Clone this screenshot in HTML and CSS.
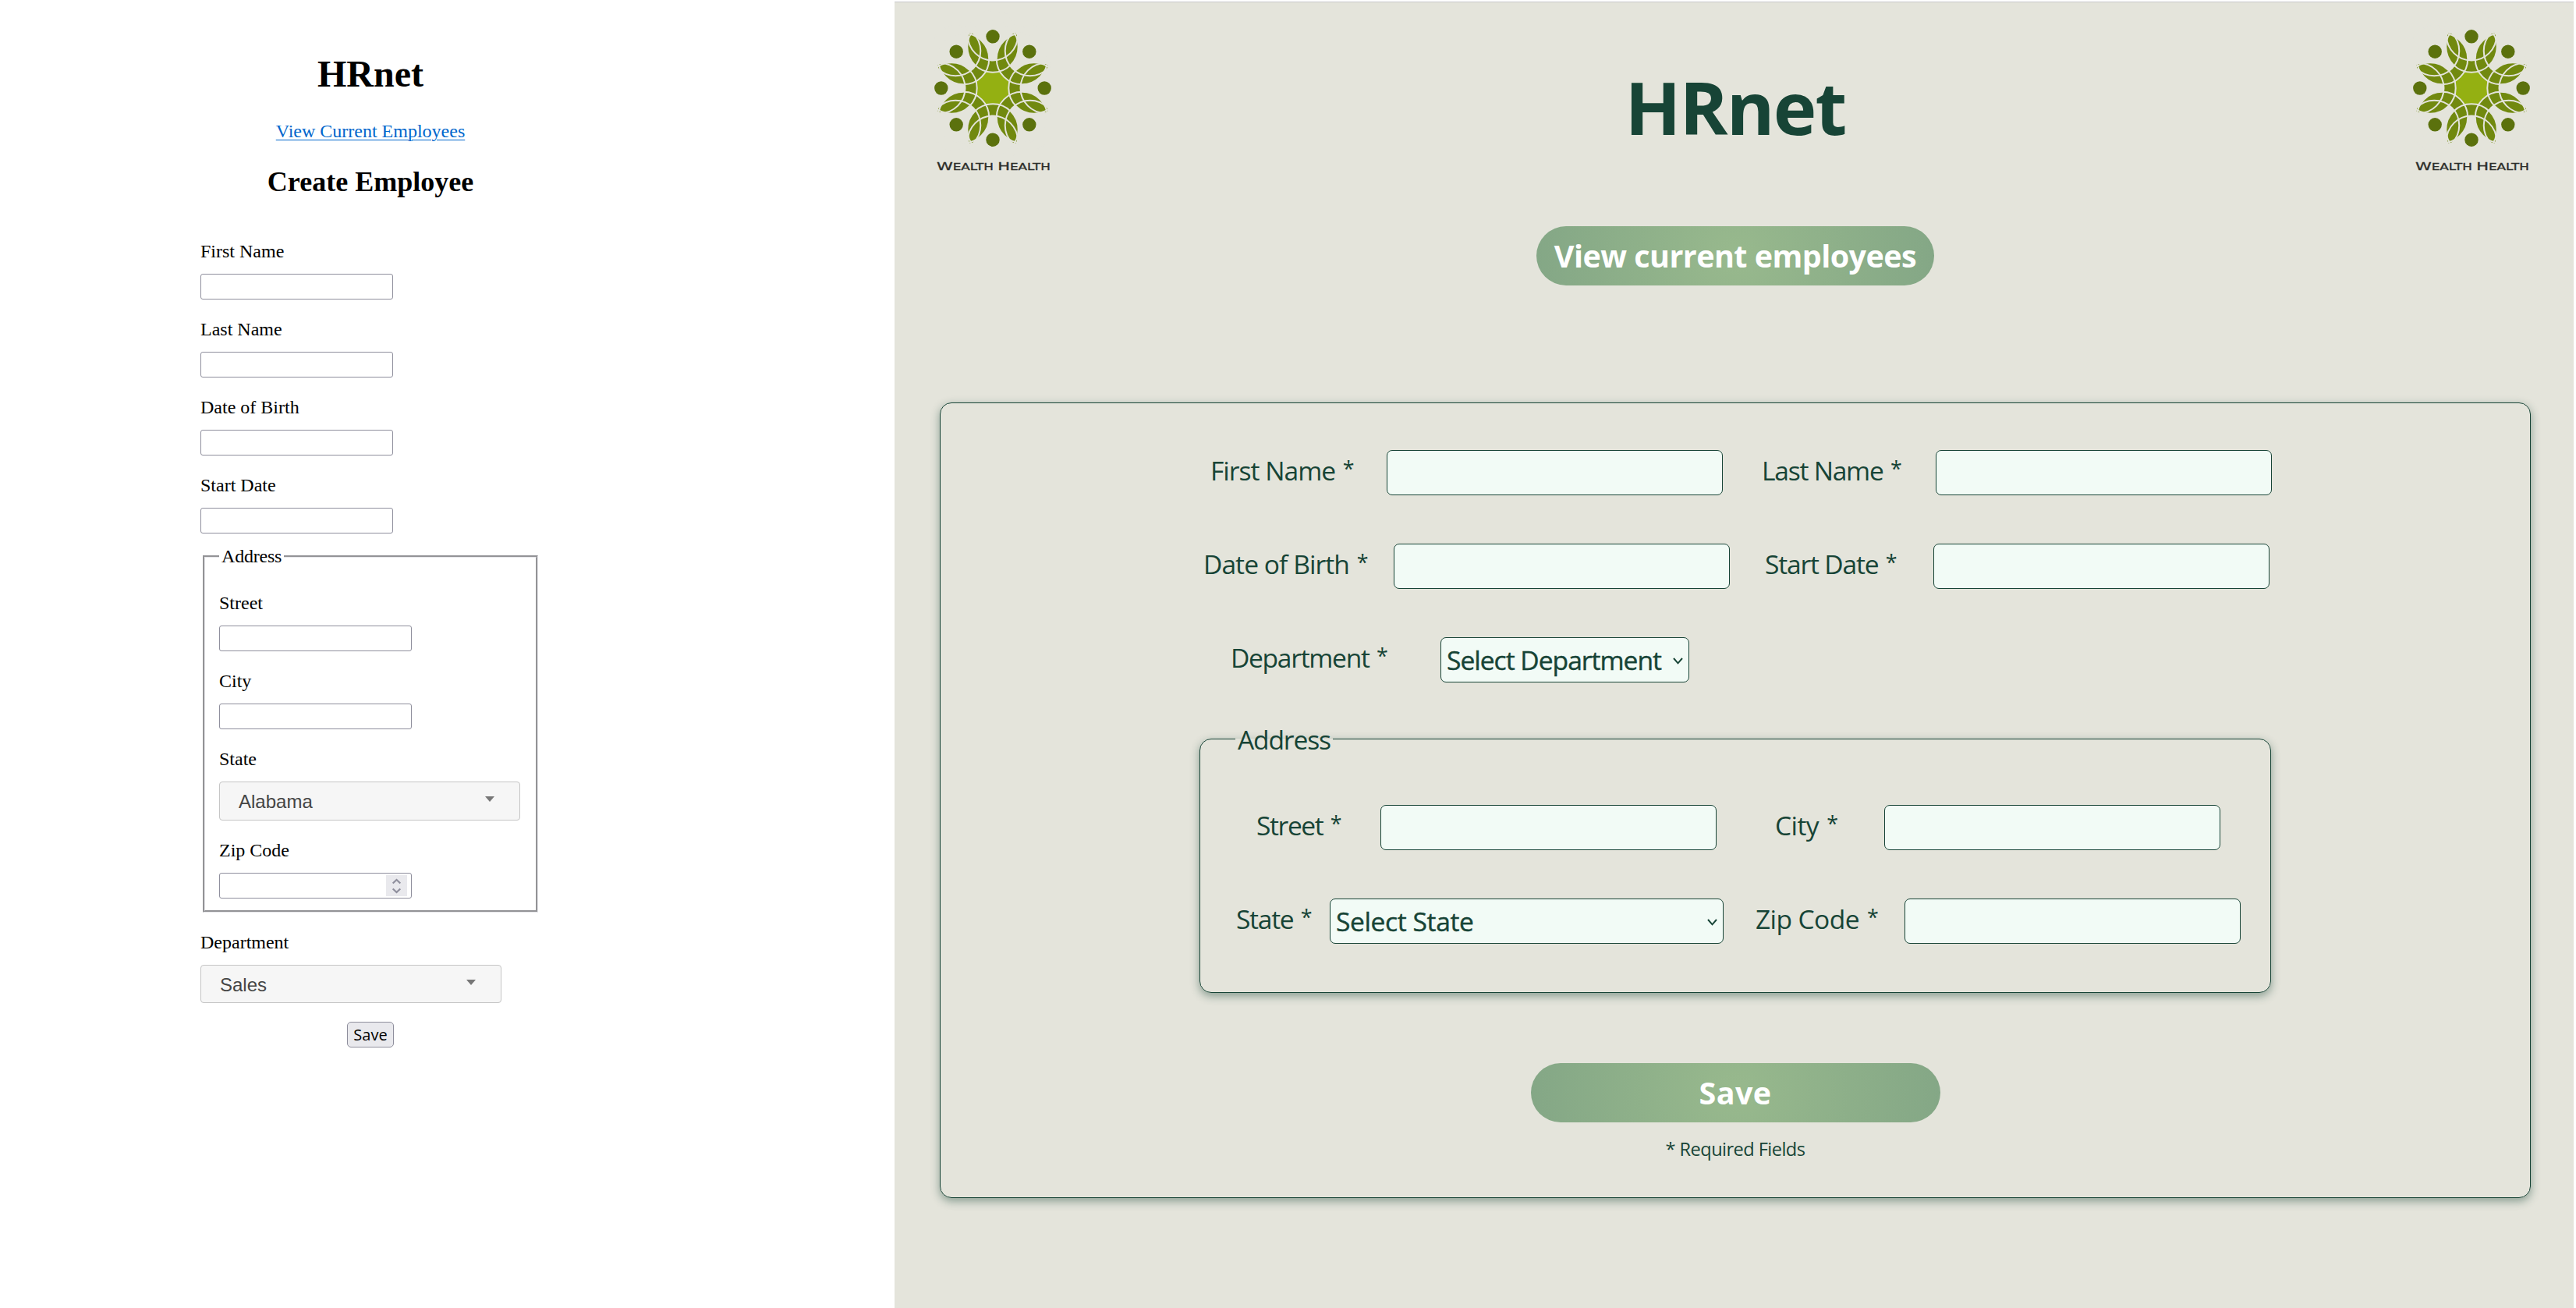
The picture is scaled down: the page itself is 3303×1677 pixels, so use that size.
FILE: index.html
```html
<!DOCTYPE html>
<html lang="en">
<head>
<meta charset="utf-8">
<title>HRnet</title>
<link rel="stylesheet" href="styles.css">
</head>
<body>
<svg class="defs" width="0" height="0" aria-hidden="true">
  <defs>
    <path id="crescent" d="M-31.5-61.8A32.7 32.7 0 1 0 31.5-61.8A32 32 0 0 1-31.5-61.8Z"/>
    <path id="leaf" d="M0-43.5A32 32 0 0 1-4-74L0-76.5L4-74A32 32 0 0 1 0-43.5Z"/>
    <g id="rings"><circle cy="-67.5" r="32"/><circle cy="-53" r="32.7"/></g>
    <circle id="dot" cy="-66.2" r="8.7"/>
    <g id="emblem">
      <circle r="22" fill="#94b012"/>
      <g fill="#71890f">
        <use href="#crescent"/><use href="#crescent" transform="rotate(45)"/><use href="#crescent" transform="rotate(90)"/><use href="#crescent" transform="rotate(135)"/><use href="#crescent" transform="rotate(180)"/><use href="#crescent" transform="rotate(225)"/><use href="#crescent" transform="rotate(270)"/><use href="#crescent" transform="rotate(315)"/>
        <use href="#leaf" transform="rotate(22.5)"/><use href="#leaf" transform="rotate(67.5)"/><use href="#leaf" transform="rotate(112.5)"/><use href="#leaf" transform="rotate(157.5)"/><use href="#leaf" transform="rotate(202.5)"/><use href="#leaf" transform="rotate(247.5)"/><use href="#leaf" transform="rotate(292.5)"/><use href="#leaf" transform="rotate(337.5)"/>
      </g>
      <g fill="none" stroke="#e4e4db" stroke-width="2">
        <use href="#rings"/><use href="#rings" transform="rotate(45)"/><use href="#rings" transform="rotate(90)"/><use href="#rings" transform="rotate(135)"/><use href="#rings" transform="rotate(180)"/><use href="#rings" transform="rotate(225)"/><use href="#rings" transform="rotate(270)"/><use href="#rings" transform="rotate(315)"/>
      </g>
      <g fill="#5b710d">
        <use href="#dot"/><use href="#dot" transform="rotate(45)"/><use href="#dot" transform="rotate(90)"/><use href="#dot" transform="rotate(135)"/><use href="#dot" transform="rotate(180)"/><use href="#dot" transform="rotate(225)"/><use href="#dot" transform="rotate(270)"/><use href="#dot" transform="rotate(315)"/>
      </g>
    </g>
  </defs>
</svg>

<main class="compare">
  <section class="before">
    <h1>HRnet</h1>
    <a href="#" class="before-link">View Current Employees</a>
    <h2>Create Employee</h2>
    <form>
      <label>First Name</label><input type="text">
      <label>Last Name</label><input type="text">
      <label>Date of Birth</label><input type="text">
      <label>Start Date</label><input type="text">
      <fieldset>
        <legend>Address</legend>
        <label>Street</label><input type="text">
        <label>City</label><input type="text">
        <label>State</label>
        <div class="menu"><span>Alabama</span><i></i></div>
        <label>Zip Code</label>
        <div class="number">
          <svg width="27" height="27" viewBox="0 0 27 27"><rect width="27" height="27" fill="#e9e9ed"/><path d="M8.7 10.5L13.5 6L18.3 10.5M8.7 17.5L13.5 22L18.3 17.5" fill="none" stroke="#8f8f9d" stroke-width="2.2"/></svg>
        </div>
      </fieldset>
      <label>Department</label>
      <div class="menu menu-dept"><span>Sales</span><i></i></div>
      <button type="button">Save</button>
    </form>
  </section>

  <section class="after">
    <header>
      <svg class="logo" viewBox="0 0 150 225" width="150" height="225"><use href="#emblem" x="75" y="110"/><text x="3" y="215" textLength="146" lengthAdjust="spacingAndGlyphs"><tspan font-size="14.5">W</tspan>EALTH <tspan font-size="14.5">H</tspan>EALTH</text></svg>
      <h1>HRnet</h1>
      <svg class="logo" viewBox="0 0 150 225" width="150" height="225"><use href="#emblem" x="75" y="110"/><text x="3" y="215" textLength="146" lengthAdjust="spacingAndGlyphs"><tspan font-size="14.5">W</tspan>EALTH <tspan font-size="14.5">H</tspan>EALTH</text></svg>
    </header>
    <a href="#" class="pill view">View current employees</a>
    <form class="card">
      <div class="fields">
        <div class="row names">
          <label class="first">First Name <b>*</b></label><input type="text">
          <label class="last">Last Name <b>*</b></label><input type="text">
        </div>
        <div class="row dates">
          <label class="birth">Date of Birth <b>*</b></label><input type="text">
          <label class="start">Start Date <b>*</b></label><input type="text">
        </div>
        <div class="row dept">
          <label class="department">Department <b>*</b></label>
          <div class="select select-dept"><span>Select Department</span><svg width="13" height="9" viewBox="0 0 13 9"><path d="M1 1L6.5 7.3L12 1"/></svg></div>
        </div>
        <fieldset>
          <legend>Address</legend>
          <div class="row street-row">
            <label class="street">Street <b>*</b></label><input type="text">
            <label class="city">City <b>*</b></label><input type="text">
          </div>
          <div class="row state-row">
            <label class="state">State <b>*</b></label>
            <div class="select select-state"><span>Select State</span><svg width="13" height="9" viewBox="0 0 13 9"><path d="M1 1L6.5 7.3L12 1"/></svg></div>
            <label class="zip">Zip Code <b>*</b></label><input type="text">
          </div>
        </fieldset>
      </div>
      <button type="button" class="pill save">Save</button>
      <p class="required">* Required Fields</p>
    </form>
  </section>
</main>
</body>
</html>
```
FILE: styles.css
```css
* { box-sizing: border-box; }
body { margin: 0; background: #fff; overflow: hidden; }
h1, h2, p { margin: 0; }
form { margin: 0; }
label { display: block; }
.defs { display: block; }
.compare { display: flex; width: 3300px; height: 1677px; }

/* Original form */
.before {
  flex: none;
  width: 1147px;
  padding: 67px 454px 0 257px;
  font: 24px/28px "Liberation Serif", serif;
  color: #000;
  text-align: center;
}
.before h1 { font-size: 48px; line-height: 56px; }
.before-link {
  display: block;
  margin-top: 31px;
  color: #0066cc;
  text-decoration: underline;
  text-decoration-thickness: 1px;
  text-underline-offset: 3px;
}
.before h2 { margin-top: 30px; font-size: 36px; line-height: 42px; }
.before form { margin-top: 54px; text-align: left; }
.before input, .number {
  display: block;
  width: 247px;
  height: 33px;
  margin: 15px 0 24px;
  border: 1px solid #8f8f9d;
  border-radius: 3px;
  background: #fff;
}
.number { display: flex; justify-content: flex-end; padding: 2px 5px 0 0; margin-bottom: 0; }
.before fieldset {
  margin: -9px 3px 24px 3px;
  padding: 32px 0 15px 18px;
  border: 3px groove #e6e6ea;
}
.before legend { padding: 0 3px; letter-spacing: -.2px; }
.menu {
  display: flex;
  justify-content: space-between;
  width: 386px;
  height: 50px;
  margin: 15px 0 24px;
  padding: 0 32px 0 24px;
  border: 1px solid #c5c5c5;
  border-radius: 4px;
  background: #f6f6f6;
  color: #454545;
  font: 24px/50px "Liberation Sans", sans-serif;
}
.menu-dept { height: 49px; line-height: 49px; }
.menu i {
  width: 0;
  height: 0;
  margin-top: 18px;
  border: 6px solid transparent;
  border-top: 7px solid #777;
  border-bottom: 0;
}
.before button {
  display: block;
  width: 60px;
  height: 33px;
  margin: 0 auto;
  padding: 0;
  border: 1px solid #8f8f9d;
  border-radius: 5px;
  background: #e9e9ed;
  color: #000;
  font: 20px/31px "Open Sans", sans-serif;
}

/* Redesigned form */
.after {
  flex: none;
  width: 2153px;
  height: 1675px;
  margin-top: 2px;
  padding: 0 55px 0 58px;
  border-top: 1px solid #c8c8cb;
  background: #e4e4db;
  color: #174436;
  font: 33.6px "Open Sans", sans-serif;
}
header { display: flex; justify-content: space-between; height: 287px; margin: 0 1px 0 -7px; }
.logo { display: block; flex: none; }
.logo text { font: 11.6px "DejaVu Sans", sans-serif; fill: #2b2d2a; stroke: #2b2d2a; stroke-width: .3; }
header h1 { margin: 70px 0 0 8px; font-size: 94px; line-height: 128px; letter-spacing: -1.8px; }
.pill {
  display: block;
  height: 76px;
  margin: 0 auto;
  padding: 0;
  border: 0;
  border-radius: 38px;
  background: radial-gradient(circle, #98b98d, #84a786);
  color: #fff;
  font: bold 39.5px/76px "Open Sans", sans-serif;
  text-align: center;
  text-decoration: none;
}
.view { width: 510px; letter-spacing: -.55px; }
.save { width: 525px; margin-top: 90px; letter-spacing: .4px; }
.card {
  height: 1020px;
  margin-top: 150px;
  padding-top: 60px;
  border: 1px solid #174436;
  border-radius: 15px;
  box-shadow: 0 4px 12px rgba(23, 68, 54, .45);
}
.fields { width: 1374px; margin: 0 auto; }
.row { display: flex; height: 58px; margin-bottom: 62px; }
.row label { flex: none; padding-left: 1px; line-height: 53px; white-space: nowrap; }
.row label b { margin-left: 2px; font-size: .8em; font-weight: normal; line-height: 0; vertical-align: 5px; }
.row input, .select {
  flex: none;
  width: 431px;
  height: 58px;
  margin: 0;
  border: 1px solid #174436;
  border-radius: 7px;
  background: #f2fbf6;
}
.names { padding-left: 13px; }
.first { width: 227px; letter-spacing: -1px; }
.last { width: 224px; margin-left: 49px; letter-spacing: -1.25px; }
.dates { padding-left: 4px; }
.birth { width: 245px; letter-spacing: -.95px; }
.start { width: 217px; margin-left: 44px; letter-spacing: -1.2px; }
.dept { padding-left: 39px; margin-bottom: 50px; }
.department { width: 270px; letter-spacing: -1.3px; }
.select { display: flex; align-items: center; justify-content: space-between; padding: 0 7px; line-height: 56px; white-space: nowrap; -webkit-text-stroke: .4px #174436; }
.select path { fill: none; stroke: #174436; stroke-width: 2; }
.select svg { flex: none; margin-top: 2px; }
.select-dept { width: 319px; letter-spacing: -1px; }
.select-state { width: 505px; letter-spacing: -.4px; }
.card fieldset {
  margin: 0;
  padding: 62px 0;
  border: 1px solid #174436;
  border-radius: 15px;
  box-shadow: 0 4px 12px rgba(23, 68, 54, .45);
}
.card legend { height: 45px; margin-left: 45px; padding: 0 3px; line-height: 47px; letter-spacing: -1.15px; }
.street-row { padding-left: 71px; }
.street { width: 160px; letter-spacing: -1.4px; }
.city { width: 141px; margin-left: 74px; letter-spacing: -.6px; }
.state-row { padding-left: 45px; margin-bottom: 0; }
.state { width: 121px; letter-spacing: -1.3px; }
.zip { width: 192px; margin-left: 40px; letter-spacing: -.6px; }
.required { margin-top: 17px; font-size: 23.6px; line-height: 34px; letter-spacing: -.55px; text-align: center; }
```
